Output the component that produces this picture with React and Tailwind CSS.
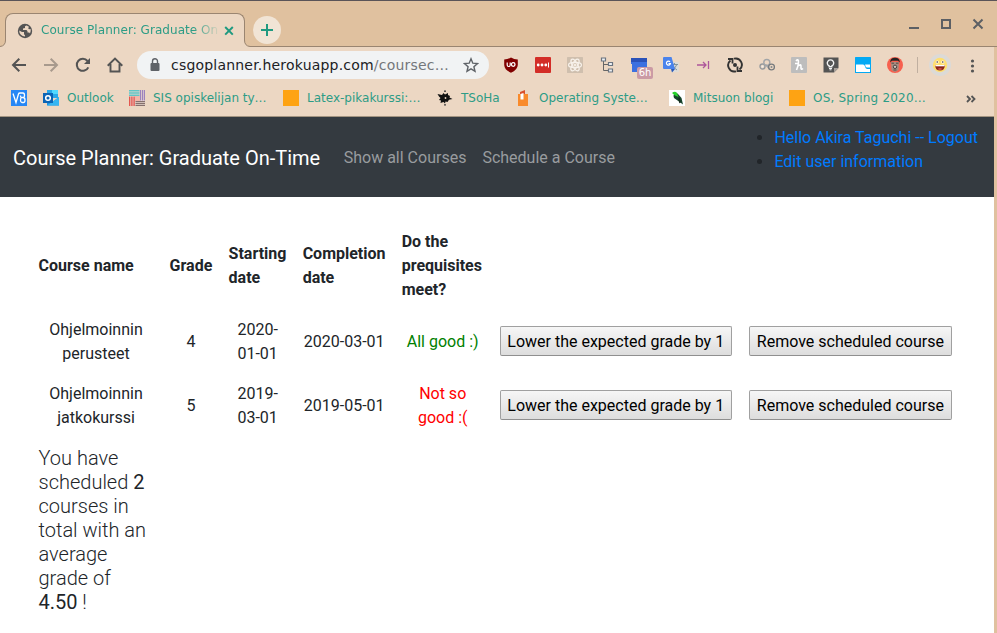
import React from "react";

const ROWS = [
  { name: "Ohjelmoinnin perusteet", grade: 4, start: ["2020-", "01-01"], end: "2020-03-01", ok: true },
  { name: "Ohjelmoinnin jatkokurssi", grade: 5, start: ["2019-", "03-01"], end: "2019-05-01", ok: false },
];

function Globe() {
  return (
    <svg className="size-4 shrink-0" viewBox="0 0 16 16">
      <circle cx="8" cy="8" r="7.200" fill="#545454" />
      <path d="M2.200 7.500 5 9h2v2.200l1 1v1.400A6 6 0 0 1 2.200 7.500Z" fill="#ecd7c3" />
      <path d="M9.500 2.500 8 3.200V5L6 5.500V7h3.500l1 1.200v1.300h1.700l.8.900A6 6 0 0 0 13.600 6l-1.600.3-.8-1.100.8-1.500Z" fill="#ecd7c3" />
    </svg>
  );
}

function TitleBar() {
  return (
    <div className="flex h-[47px] items-end border-t border-t-[#5a5458] bg-[#e0c19f]">
      <div className="h-[34px] w-[5px] border-b border-[#9a8571]" />
      <div className="relative flex h-[34px] w-[240px] items-center rounded-t-[8px] border border-b-0 border-[#9a8571] bg-[#ecd7c3] pl-[11px]">
        <svg className="absolute -left-[6px] bottom-0 h-[7px] w-[7px]" viewBox="0 0 7 7">
          <path d="M7 0V7H0V6.500Q5.500 6 5.500 0Z" fill="#ecd7c3" />
          <path d="M0 6.500Q5.500 6 5.500 0" fill="none" stroke="#9a8571" />
        </svg>
        <svg className="absolute -right-[6px] bottom-0 h-[7px] w-[7px]" viewBox="0 0 7 7">
          <path d="M0 0V7H7V6.500Q1.500 6 1.500 0Z" fill="#ecd7c3" />
          <path d="M7 6.500Q1.500 6 1.500 0" fill="none" stroke="#9a8571" />
        </svg>
        <Globe />
        <div className="-mt-[2px] ml-2 w-[180px] whitespace-nowrap text-[12px] leading-4 tracking-[0.05px] text-[#2c9c86] [mask-image:linear-gradient(to_right,black_152px,transparent_180px)]">
          Course Planner: Graduate On
        </div>
        <svg className="size-4" viewBox="0 0 16 16">
          <path d="m4.200 4 7.600 7.600m0-7.600-7.600 7.600" stroke="#1f9a80" strokeWidth="2" />
        </svg>
      </div>
      <div className="flex h-[34px] flex-1 items-start border-b border-[#9a8571] pl-2">
        <div className="mt-[3px] flex size-7 items-center justify-center rounded-full bg-[#f1e4d5]">
          <svg className="size-3" viewBox="0 0 12 12">
            <path d="M6 0v12M0 6h12" stroke="#1f9a80" strokeWidth="2" />
          </svg>
        </div>
        <div className="-mt-[5px] ml-auto flex pr-[3px] text-[#5c5f64]">
          <svg className="h-8 w-8" viewBox="0 0 32 32"><path d="M11 20h10" stroke="currentColor" strokeWidth="2" /></svg>
          <svg className="h-8 w-8" viewBox="0 0 32 32"><path d="M12 12h8v8h-8z" fill="none" stroke="currentColor" strokeWidth="2" /></svg>
          <svg className="h-8 w-8" viewBox="0 0 32 32"><path d="m11.500 11.500 9 9m0-9-9 9" stroke="currentColor" strokeWidth="2" /></svg>
        </div>
      </div>
    </div>
  );
}

function Slot({ children, className = "" }) {
  return <div className={"relative flex h-7 w-8 shrink-0 items-center justify-center " + className}>{children}</div>;
}

function Svg({ children, size = "size-4", box = "0 0 16 16" }) {
  return <svg className={size} viewBox={box} fill="none">{children}</svg>;
}

function Extensions() {
  return (
    <div className="ml-[6px] flex">
      <Slot>
        <Svg>
          <path d="M8 0.500Q11 2.500 14.800 2.500V8Q14.500 13 8 15.800 1.500 13 1.200 8V2.500Q5 2.500 8 .5Z" fill="#800000" />
          <path d="M4.200 5.500V8a1.500 1.500 0 0 0 3 0V5.500" stroke="#fff" strokeWidth="1.200" />
          <circle cx="10.200" cy="7.500" r="1.800" stroke="#fff" strokeWidth="1.300" />
        </Svg>
      </Slot>
      <Slot>
        <Svg>
          <rect width="16" height="16" rx="1" fill="#d32d27" />
          <circle cx="3.200" cy="8" r="1.400" fill="#fff" /><circle cx="7" cy="8" r="1.400" fill="#fff" /><circle cx="10.800" cy="8" r="1.400" fill="#fff" />
          <path d="M13.500 5.500v5" stroke="#fff" />
        </Svg>
      </Slot>
      <Slot>
        <Svg>
          <rect width="16" height="16" rx=".5" fill="#cfbfae" />
          <g stroke="#f7f1ea" strokeWidth="1.200">
            <ellipse cx="8" cy="8" rx="6.500" ry="2.600" />
            <ellipse cx="8" cy="8" rx="6.500" ry="2.600" transform="rotate(60 8 8)" />
            <ellipse cx="8" cy="8" rx="6.500" ry="2.600" transform="rotate(120 8 8)" />
          </g>
          <circle cx="8" cy="8" r="1.500" fill="#f4ece3" />
        </Svg>
      </Slot>
      <Slot>
        <Svg>
          <path d="M4.500 4v9.500H10M4.500 7.500H10" stroke="#666" />
          <path d="M2.500 1h4v3h-4zM9.500 5.500h4v3h-4zM9.500 12h4v3h-4z" fill="#eef1f4" stroke="#6b7480" strokeWidth="1.200" />
        </Svg>
      </Slot>
      <Slot>
        <Svg>
          <path d="M0 1h16v14H1V7H0z" fill="#3c70e0" />
          <path d="M0 1h16v4H0z" fill="#2b52b8" />
        </Svg>
        <div className="absolute bottom-0 right-[2px] flex h-3 w-4 items-center justify-center rounded-[2px] bg-[#cb9ba5] text-[10px] leading-3 text-white">6h</div>
      </Slot>
      <Slot>
        <Svg>
          <path d="M6 5h9q1 0 1 1v8q0 1-1 1H9z" fill="#dedbd6" />
          <path d="M8.500 7.500H15M11.500 6v1.500M9.500 8q1 3 4.500 5M13.500 8q-1 3-4 5" stroke="#82949c" />
          <path d="M1 0h7.500L12 12H1q-1 0-1-1V1q0-1 1-1Z" fill="#4a83ec" />
          <path d="M8 12h4l-3 3.500Z" fill="#2858b8" />
          <path d="M7 4.800a2 2 0 1 0 .4 1.700H5.500" stroke="#fff" strokeWidth="1.200" />
        </Svg>
      </Slot>
      <Slot>
        <Svg><path d="M2 8h9M8 5l3 3-3 3M13.500 4v8" stroke="#ad569b" strokeWidth="1.300" /></Svg>
      </Slot>
      <Slot>
        <Svg>
          <path d="M9 14.300A6.200 6.200 0 0 1 3.500 3.500M7 1.700a6.200 6.200 0 0 1 5.500 10.800" stroke="#333" strokeWidth="1.900" />
          <path d="M1 2h4.500v4.500M15 14h-4.500V9.500" stroke="#333" strokeWidth="1.800" />
          <circle cx="8" cy="8" r="2" fill="#333" />
        </Svg>
      </Slot>
      <Slot>
        <Svg>
          <circle cx="3.500" cy="9.500" r="2.500" stroke="#969a9d" strokeWidth="1.400" />
          <circle cx="7.800" cy="5.500" r="3" stroke="#a2a5a8" strokeWidth="1.400" />
          <path d="m6.500 7.500 4 4.500" stroke="#a2a5a8" strokeWidth="1.400" />
          <circle cx="12.500" cy="10" r="2.900" stroke="#777b7e" strokeWidth="1.300" /><circle cx="12.500" cy="10" r="1" fill="#85898c" />
          <circle cx="3.500" cy="9.500" r="1" fill="#eee" />
        </Svg>
      </Slot>
      <Slot>
        <Svg>
          <rect width="16" height="16" rx="1" fill="#bdbdbd" />
          <path d="M5.500 13Q8 7 7.300 3.500q-.8-1.500-2.300.5M6.500 9.500q4-3.500 3.500.5-.3 3.500 2 1.500M4 6.500h2.500" stroke="#fff" strokeWidth="1.600" />
        </Svg>
      </Slot>
      <Slot>
        <Svg>
          <path d="M.5.500h15V11L11 15.500H.5z" fill="#545454" />
          <path d="M11 15.500V11h4.500z" fill="#a9a19a" />
          <path d="M6.200 9.800V9a3.200 3.200 0 1 1 2.600 0v.8z" stroke="#f4f4f4" strokeWidth="1.400" />
          <path d="M6 11.500h3M6.500 12.800h2" stroke="#f4f4f4" strokeWidth="1" />
        </Svg>
      </Slot>
      <Slot>
        <Svg>
          <rect width="16" height="16" rx=".5" fill="#03a9f4" />
          <path d="M1 7.500h7q1.500 0 2 2T12 12h3v3H1z" fill="#fff" />
          <path d="M10 7.500h5v3h-3q-1.500 0-2-3z" fill="#fff" />
        </Svg>
      </Slot>
      <Slot>
        <Svg>
          <circle cx="8" cy="8" r="8" fill="#f7604f" />
          <path d="M4 5h8l-.5 8L8 15l-3.500-2z" fill="#a78b7f" />
          <path d="M3.200 5.500Q3 1 8 .8q5 .2 4.800 4.700L11 3.800H5z" fill="#282323" />
          <path d="M4.500 6.200h2.500M9 6.200h2.500M6.500 13h3" stroke="#5a4a44" />
          <circle cx="8" cy="9.800" r="1.700" stroke="#4b413e" fill="#d1c5be" />
        </Svg>
      </Slot>
    </div>
  );
}

function Toolbar() {
  return (
    <div className="flex h-[35px] items-center pl-[3px] pt-[1px] text-[#545454]">
      <Slot><Svg><path d="M15 8H2M8.300 1.700 2 8l6.300 6.300" stroke="currentColor" strokeWidth="2" /></Svg></Slot>
      <Slot><Svg><path d="M1 8h13M7.700 1.700 14 8l-6.300 6.300" stroke="#a89a8d" strokeWidth="2" /></Svg></Slot>
      <Slot><Svg><path d="M13.300 10.300A6 6 0 1 1 12.500 4" stroke="currentColor" strokeWidth="2" /><path d="M15 1v6H9z" fill="currentColor" /></Svg></Slot>
      <Slot><Svg><path d="M.7 8.700 8 1.500l7.300 7.200M3.500 7v7.500h9V7" stroke="currentColor" strokeWidth="1.900" /></Svg></Slot>
      <div className="ml-[6px] flex h-7 w-[352px] items-center rounded-full bg-[#f1f3f4] pl-[10px] pr-[10px]">
        <Svg>
          <rect x="3.500" y="6" width="9" height="8" rx="1" fill="#5f6368" />
          <path d="M5.500 6.500V4.300a2.500 2.500 0 0 1 5 0v2.200" stroke="#5f6368" strokeWidth="1.400" />
        </Svg>
        <div className="ml-2 flex-1 whitespace-nowrap text-[14px] leading-5 tracking-[0.2px] text-[#202124]">
          csgoplanner.herokuapp.com<span className="text-[#74777b]">/coursec…</span>
        </div>
        <Svg><path d="m8 1.800 1.800 4.400 4.700.4-3.600 3.100 1.100 4.600L8 11.800l-4 2.500 1.100-4.600L1.500 6.600l4.700-.4Z" stroke="#5f6368" strokeWidth="1.400" /></Svg>
      </div>
      <Extensions />
      <div className="ml-[6px] h-4 w-px bg-[#c0afa0]" />
      <div className="ml-[11px] flex size-[22px] items-center justify-center rounded-full bg-[#dcdad7]">
        <Svg>
          <circle cx="8" cy="8" r="7.200" fill="#ffdf70" />
          <path d="M3 8h10q-.3 5.500-5 5.500T3 8Z" fill="#8b261a" />
          <path d="M3.300 8h9.400v1.300H3.300z" fill="#fff" />
          <path d="M5.500 12q2.500-1.500 5 0-2.500 1.500-5 0Z" fill="#e7635c" />
          <circle cx="5.200" cy="5" r="1.500" fill="#fff" /><circle cx="10.800" cy="5" r="1.500" fill="#fff" />
          <circle cx="5.200" cy="5" r=".8" fill="#432" /><circle cx="10.800" cy="5" r=".8" fill="#432" />
        </Svg>
      </div>
      <div className="ml-[13px] mt-[1px]"><Svg><g fill="#545454"><circle cx="8.500" cy="3" r="1.600" /><circle cx="8.500" cy="8" r="1.600" /><circle cx="8.500" cy="13" r="1.600" /></g></Svg></div>
    </div>
  );
}

const Orange = () => <div className="size-4 bg-[#fea313]" />;

function Bookmark({ icon, label, width, spacing = "" }) {
  return (
    <div className={"flex shrink-0 items-center gap-2 whitespace-nowrap pl-2 " + width}>
      {icon}
      {label && <span className={spacing}>{label}</span>}
    </div>
  );
}

function BookmarkBar() {
  return (
    <div className="flex h-[35px] items-center border-b border-[#a39481] pb-[2px] pl-[3px] text-[12px] leading-4 text-[#2c9c86]">
      <Bookmark width="w-8" icon={
        <Svg>
          <path d="M0 0h16v16H0z" fill="#2787f5" />
          <path d="m2 3.500 3 9L7.500 4q.3-1 1.500-1h3q1.500 0 1.500 2.300T12 7.500h-1.500Q9.500 7.500 9.500 5.500M10.500 7.500Q9.500 8 9.500 10.200t1.500 2.300h1.500q1.500 0 1.500-2.500T12 7.500" stroke="#fff" strokeWidth="1.300" />
        </Svg>
      } />
      <Bookmark width="w-[86px]" label="Outlook" icon={
        <Svg>
          <path d="M4 0h11v8H4z" fill="#0a78d0" /><path d="M9 0h6v4H9z" fill="#50d9ff" /><path d="M4 0h5v4H4z" fill="#28a8ea" /><path d="M9 4h6v4H9z" fill="#28a8ea" />
          <path d="M4 15.500V8l6 3.500L16 7v8.500z" fill="#1b8fe0" /><path d="M4 15.500 16 7v8.500z" fill="#35b5f2" />
          <path d="M0 3h10v10H0z" fill="#0b64b5" /><circle cx="5" cy="8" r="2.300" stroke="#fff" strokeWidth="1.500" />
        </Svg>
      } />
      <Bookmark width="w-[154px]" label="SIS opiskelijan ty…" icon={
        <Svg>
          <path d="M0 0h16v16H0z" fill="#ead8cf" />
          <path d="M0 .7h10.500M0 3h10.500M0 5.300h10.500" stroke="#5fc5c6" strokeWidth="1.400" />
          <path d="M11.500 0v10.500M13.500 0v10.500M15.400 0v10.500" stroke="#9c83bd" strokeWidth="1.200" />
          <path d="M.7 6.500V16M2.900 6.500V16M5.100 6.500V16" stroke="#e4574f" strokeWidth="1.400" />
          <path d="M6.500 11.700H16M6.500 13.500H16M6.500 15.400H16" stroke="#85706d" strokeWidth="1.200" />
          <path d="M6 6h5v5H6z" fill="#f3b6a9" />
        </Svg>
      } />
      <Bookmark width="w-[154px]" label="Latex-pikakurssi:…" icon={<Orange />} />
      <Bookmark width="w-[78px]" label="TSoHa" icon={
        <Svg>
          <path d="M.5 4 5 5l1.500-2L8 4.500l3-1.500v2l2 1-.5 1.500 3 1.500-3.500.7-1.500 2.300-2-.5L8 13.500 6.500 12l-3 1 .5-2.500L2 10l1.500-2L2 6.500Z" fill="#111" />
          <circle cx="8" cy="1.200" r=".9" fill="#333" /><circle cx="8" cy="14.800" r=".9" fill="#333" />
          <circle cx="8.500" cy="8" r=".9" fill="#ecd7c3" />
        </Svg>
      } />
      <Bookmark width="w-[154px]" label="Operating Syste…" icon={
        <Svg>
          <path d="M3 4h10v12H3z" fill="#f98a2b" /><path d="M5 4V2l5-2v4z" fill="#d9512c" /><path d="m5.500 4 3-1v6.500h-3z" fill="#fff" />
        </Svg>
      } />
      <Bookmark width="w-[120px]" label="Mitsuon blogi" icon={
        <Svg>
          <path d="M0 0h16v16H0z" fill="#fff" /><path d="M4 3q3-1.500 5 1l3.500 4 1.500 6.500-4-3L5 8Q4 6 5 4Z" fill="#17452b" />
          <path d="M3 3Q6 .5 8 3l1.500 4L6 5.500z" fill="#26d32c" /><path d="m10 8 1 5" stroke="#11291c" strokeWidth="1.500" />
        </Svg>
      } />
      <Bookmark width="w-[154px]" spacing="tracking-[0.2px]" label="OS, Spring 2020…" icon={<Orange />} />
      <svg className="ml-[31px] mt-[1px] h-2 w-[10px]" viewBox="0 0 10 8" fill="none">
        <path d="m1 1 3 3-3 3M5.500 1l3 3-3 3" stroke="#545454" strokeWidth="1.800" />
      </svg>
    </div>
  );
}

function Navbar() {
  return (
    <nav className="flex h-20 items-center bg-[#343a40] pr-4 pl-[13px] pt-[2px] text-[16px] leading-6">
      <span className="mr-[15.500px] whitespace-nowrap text-[20px] leading-[30px] text-white">Course Planner: Graduate On-Time</span>
      <div className="flex whitespace-nowrap text-[#999c9f]">
        <a className="p-2">Show all Courses</a>
        <a className="p-2">Schedule a Course</a>
      </div>
      <ul className="mb-4 ml-auto list-disc whitespace-nowrap pl-10 text-[#212529]">
        <li><a className="text-[#007bff]">Hello Akira Taguchi -- Logout</a></li>
        <li><a className="text-[#007bff]">Edit user information</a></li>
      </ul>
    </nav>
  );
}

function Button({ children, width }) {
  return (
    <button className={"block h-[30px] whitespace-nowrap rounded-[2px] border border-[#a0a0a0] border-b-[#8f8f8f] bg-linear-to-b from-[#f6f6f6] to-[#dddddd] pt-[2px] text-center leading-[26px] text-black " + width}>
      {children}
    </button>
  );
}

function CourseTable() {
  return (
    <table className="ml-[30.5px] mt-[25px] w-[929.5px] table-fixed border-collapse text-center text-[16px] leading-6">
      <colgroup>
        <col className="w-[131px]" /><col className="w-[59px]" /><col className="w-[74px]" /><col className="w-[99px]" />
        <col className="w-[98px]" /><col className="w-[249px]" /><col className="w-[219px]" />
      </colgroup>
      <thead>
        <tr className="text-left [&>th]:p-2 [&>th]:font-bold">
          <th>Course name</th>
          <th>Grade</th>
          <th>Starting date</th>
          <th>Completion date</th>
          <th>Do the prequisites meet?</th>
          <th /><th />
        </tr>
      </thead>
      <tbody>
        {ROWS.map((r) => (
          <tr key={r.name} className="h-16">
            <td className="p-2">{r.name}</td>
            <td className="p-2">{r.grade}</td>
            <td className="p-2">{r.start[0]}<br />{r.start[1]}</td>
            <td className="whitespace-nowrap p-2">{r.end}</td>
            {r.ok ? <td className="p-2 text-[#008000]">All good :)</td> : <td className="p-2 text-[#ff0000]">Not so good :(</td>}
            <td className="px-2 pb-[10px] pt-2"><Button width="w-[232px]">Lower the expected grade by 1</Button></td>
            <td className="px-2 pb-[10px] pt-2"><Button width="w-[203px]">Remove scheduled course</Button></td>
          </tr>
        ))}
        <tr>
          <td className="px-2 pt-2 text-left text-[20px] font-light leading-6">
            You have scheduled <b className="font-normal">2</b> courses in total with an average grade of <b className="font-normal">4.50</b> !
          </td>
        </tr>
      </tbody>
    </table>
  );
}

export default function App() {
  return (
    <div className="flex h-[633px] w-[997px] flex-col overflow-hidden bg-[#e0c19f] font-['DejaVu_Sans',sans-serif]">
      <TitleBar />
      <div className="mr-[3px] flex flex-1 flex-col bg-[#ecd7c3]">
        <Toolbar />
        <BookmarkBar />
        <div className="flex-1 bg-white font-[Roboto,sans-serif] text-[#212529]">
          <Navbar />
          <CourseTable />
        </div>
      </div>
    </div>
  );
}
